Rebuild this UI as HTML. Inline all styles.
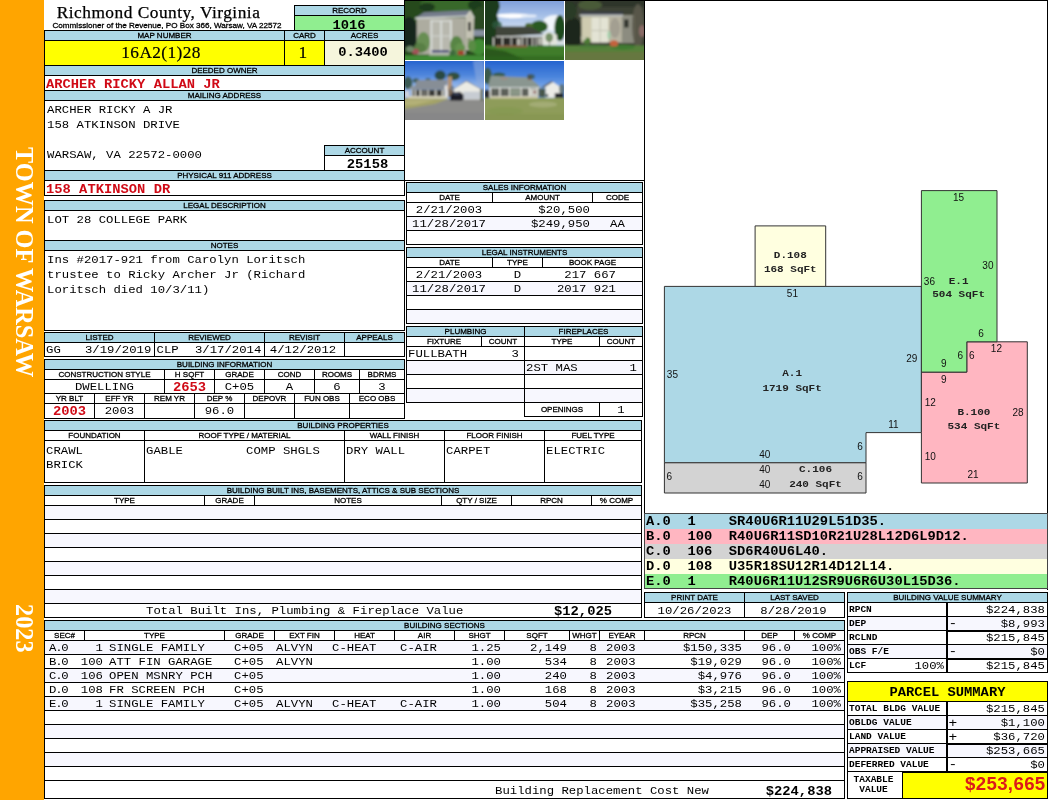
<!DOCTYPE html>
<html lang="en"><head><meta charset="utf-8"><title>Richmond County, Virginia - Property Record 1016</title>
<style>
html,body{margin:0;padding:0;background:#fff;}
#p{will-change:transform;position:relative;width:1050px;height:800px;overflow:hidden;background:#fff;font-family:"Liberation Mono",monospace;}
.b{position:absolute;box-sizing:border-box;border:1px solid #000;}
.r{position:absolute;}
.t{position:absolute;white-space:pre;overflow:visible;color:#000;}
.h{font-family:"Liberation Sans",sans-serif;font-size:8px;-webkit-text-stroke:0.3px #000;}
.v{font-family:"Liberation Mono",monospace;font-size:12.3px;}
.sg{font-family:"Liberation Mono",monospace;font-size:14.5px;}
.vb{font-family:"Liberation Mono",monospace;font-size:13.8px;font-weight:bold;}
.vr{font-family:"Liberation Mono",monospace;font-size:13.8px;font-weight:bold;color:#D00A16;}
.lb{font-family:"Liberation Mono",monospace;font-size:9.5px;font-weight:bold;}
.lst{font-family:"Liberation Mono",monospace;font-size:13.8px;font-weight:bold;}
.ps{font-family:"Liberation Mono",monospace;font-size:13.8px;font-weight:bold;}
.tax{font-family:"Liberation Sans",sans-serif;font-size:18.67px;letter-spacing:0.35px;font-weight:bold;color:#DC1A1A;}
.title{font-family:"Liberation Serif",serif;font-size:17.33px;letter-spacing:0.5px;-webkit-text-stroke:0.25px #000;}
.sub{font-family:"Liberation Sans",sans-serif;font-size:8.1px;-webkit-text-stroke:0.3px #000;}
.big{font-family:"Liberation Serif",serif;font-size:17.33px;letter-spacing:0.4px;-webkit-text-stroke:0.2px #000;}
.side{font-family:"Liberation Serif",serif;font-size:24.3px;font-weight:bold;color:#fff;line-height:24px;transform-origin:0 0;transform:rotate(90deg) translateY(-100%);}
.sk{font-family:"Liberation Sans",sans-serif;font-size:10px;}
.skt{font-family:"Liberation Sans",sans-serif;font-size:10px;fill:#111;}
.skl2{font-family:"Liberation Mono",monospace;font-size:11px;font-weight:bold;fill:#222;}
.skl{font-family:"Liberation Mono",monospace;font-size:9.5px;font-weight:bold;}
</style></head>
<body><div id="p">
<div class="r" style="left:0px;top:0px;width:44px;height:800px;background:#FFA500;"></div>
<div class="t side" style="left:11.9px;top:147.4px;">TOWN OF WARSAW</div>
<div class="t side" style="left:11.9px;top:604px;">2023</div>
<div class="t title" style="left:42.5px;top:0.6px;width:232px;height:24px;line-height:24px;text-align:center;">Richmond County, Virginia</div>
<div class="t sub" style="left:44px;top:20.6px;width:246px;height:10px;line-height:10px;text-align:center;">Commissioner of the Revenue, PO Box 366, Warsaw, VA 22572</div>
<div class="b" style="left:294px;top:5px;width:111px;height:11px;background:#ADD8E6;"></div>
<div class="t h" style="left:295px;top:6px;width:109px;height:9px;line-height:9px;text-align:center;">RECORD</div>
<div class="b" style="left:294px;top:15px;width:111px;height:16px;background:#90EE90;"></div>
<div class="t vb" style="left:294.5px;top:18.62px;width:109px;height:14px;line-height:14px;text-align:center;transform-origin:0 10.68px;transform:scaleY(0.87);">1016</div>
<div class="b" style="left:44px;top:30px;width:241px;height:11px;background:#ADD8E6;"></div>
<div class="b" style="left:284px;top:30px;width:41px;height:11px;background:#ADD8E6;"></div>
<div class="b" style="left:324px;top:30px;width:81px;height:11px;background:#ADD8E6;"></div>
<div class="t h" style="left:45px;top:31px;width:239px;height:9px;line-height:9px;text-align:center;">MAP NUMBER</div>
<div class="t h" style="left:285px;top:31px;width:39px;height:9px;line-height:9px;text-align:center;">CARD</div>
<div class="t h" style="left:325px;top:31px;width:79px;height:9px;line-height:9px;text-align:center;">ACRES</div>
<div class="b" style="left:44px;top:40px;width:241px;height:26px;background:#FFFF00;"></div>
<div class="b" style="left:284px;top:40px;width:41px;height:26px;background:#FFFF00;"></div>
<div class="b" style="left:324px;top:40px;width:81px;height:26px;background:#F5F5DC;"></div>
<div class="t big" style="left:41.6px;top:41px;width:239px;height:24px;line-height:24px;text-align:center;">16A2(1)28</div>
<div class="t big" style="left:283.5px;top:41px;width:39px;height:24px;line-height:24px;text-align:center;">1</div>
<div class="t vb" style="left:323.5px;top:41.12px;width:79px;height:24px;line-height:24px;text-align:center;transform-origin:0 15.68px;transform:scaleY(0.87);">0.3400</div>
<div class="b" style="left:44px;top:65px;width:361px;height:11px;background:#ADD8E6;"></div>
<div class="t h" style="left:45px;top:66px;width:359px;height:9px;line-height:9px;text-align:center;">DEEDED OWNER</div>
<div class="b" style="left:44px;top:75px;width:361px;height:16px;background:#fff;"></div>
<div class="t vr" style="left:46px;top:77.72px;width:358px;height:14px;line-height:14px;text-align:left;transform-origin:0 10.68px;transform:scaleY(0.87);">ARCHER RICKY ALLAN JR</div>
<div class="b" style="left:44px;top:90px;width:361px;height:11px;background:#ADD8E6;"></div>
<div class="t h" style="left:45px;top:91px;width:359px;height:9px;line-height:9px;text-align:center;">MAILING ADDRESS</div>
<div class="b" style="left:44px;top:100px;width:361px;height:71px;background:#fff;"></div>
<div class="t v" style="left:47px;top:103.22px;width:300px;height:15px;line-height:15px;text-align:left;transform-origin:0 10.78px;transform:scaleY(0.87);">ARCHER RICKY A JR</div>
<div class="t v" style="left:47px;top:118.22px;width:300px;height:15px;line-height:15px;text-align:left;transform-origin:0 10.78px;transform:scaleY(0.87);">158 ATKINSON DRIVE</div>
<div class="t v" style="left:47px;top:148.22px;width:300px;height:15px;line-height:15px;text-align:left;transform-origin:0 10.78px;transform:scaleY(0.87);">WARSAW, VA 22572-0000</div>
<div class="b" style="left:324px;top:145px;width:81px;height:11px;background:#ADD8E6;"></div>
<div class="t h" style="left:325px;top:146px;width:79px;height:9px;line-height:9px;text-align:center;">ACCOUNT</div>
<div class="b" style="left:324px;top:155px;width:81px;height:16px;background:#fff;"></div>
<div class="t vb" style="left:328px;top:158.32px;width:79px;height:14px;line-height:14px;text-align:center;transform-origin:0 10.68px;transform:scaleY(0.87);">25158</div>
<div class="b" style="left:44px;top:170px;width:361px;height:11px;background:#ADD8E6;"></div>
<div class="t h" style="left:45px;top:171px;width:359px;height:9px;line-height:9px;text-align:center;">PHYSICAL 911 ADDRESS</div>
<div class="b" style="left:44px;top:180px;width:361px;height:16px;background:#fff;"></div>
<div class="t vr" style="left:46px;top:182.72px;width:358px;height:14px;line-height:14px;text-align:left;transform-origin:0 10.68px;transform:scaleY(0.87);">158 ATKINSON DR</div>
<div class="b" style="left:44px;top:200px;width:361px;height:11px;background:#ADD8E6;"></div>
<div class="t h" style="left:45px;top:201px;width:359px;height:9px;line-height:9px;text-align:center;">LEGAL DESCRIPTION</div>
<div class="b" style="left:44px;top:210px;width:361px;height:31px;background:#fff;"></div>
<div class="t v" style="left:47px;top:213.22px;width:350px;height:15px;line-height:15px;text-align:left;transform-origin:0 10.78px;transform:scaleY(0.87);">LOT 28 COLLEGE PARK</div>
<div class="b" style="left:44px;top:240px;width:361px;height:11px;background:#ADD8E6;"></div>
<div class="t h" style="left:45px;top:241px;width:359px;height:9px;line-height:9px;text-align:center;">NOTES</div>
<div class="b" style="left:44px;top:250px;width:361px;height:81px;background:#fff;"></div>
<div class="t v" style="left:47px;top:253.22px;width:350px;height:15px;line-height:15px;text-align:left;transform-origin:0 10.78px;transform:scaleY(0.87);">Ins #2017-921 from Carolyn Loritsch</div>
<div class="t v" style="left:47px;top:268.22px;width:350px;height:15px;line-height:15px;text-align:left;transform-origin:0 10.78px;transform:scaleY(0.87);">trustee to Ricky Archer Jr (Richard</div>
<div class="t v" style="left:47px;top:283.22px;width:350px;height:15px;line-height:15px;text-align:left;transform-origin:0 10.78px;transform:scaleY(0.87);">Loritsch died 10/3/11)</div>
<div class="b" style="left:44px;top:332px;width:111px;height:11px;background:#ADD8E6;"></div>
<div class="b" style="left:154px;top:332px;width:111px;height:11px;background:#ADD8E6;"></div>
<div class="b" style="left:264px;top:332px;width:81px;height:11px;background:#ADD8E6;"></div>
<div class="b" style="left:344px;top:332px;width:61px;height:11px;background:#ADD8E6;"></div>
<div class="t h" style="left:45px;top:333px;width:109px;height:9px;line-height:9px;text-align:center;">LISTED</div>
<div class="t h" style="left:155px;top:333px;width:109px;height:9px;line-height:9px;text-align:center;">REVIEWED</div>
<div class="t h" style="left:265px;top:333px;width:79px;height:9px;line-height:9px;text-align:center;">REVISIT</div>
<div class="t h" style="left:345px;top:333px;width:59px;height:9px;line-height:9px;text-align:center;">APPEALS</div>
<div class="b" style="left:44px;top:342px;width:111px;height:15px;background:#fff;"></div>
<div class="b" style="left:154px;top:342px;width:111px;height:15px;background:#fff;"></div>
<div class="b" style="left:264px;top:342px;width:81px;height:15px;background:#fff;"></div>
<div class="b" style="left:344px;top:342px;width:61px;height:15px;background:#fff;"></div>
<div class="t v" style="left:46px;top:344.02px;width:108px;height:13px;line-height:13px;text-align:left;transform-origin:0 9.78px;transform:scaleY(0.87);">GG</div>
<div class="t v" style="left:46px;top:344.02px;width:105.3px;height:13px;line-height:13px;text-align:right;transform-origin:0 9.78px;transform:scaleY(0.87);">3/19/2019</div>
<div class="t v" style="left:156.5px;top:344.02px;width:108px;height:13px;line-height:13px;text-align:left;transform-origin:0 9.78px;transform:scaleY(0.87);">CLP</div>
<div class="t v" style="left:156px;top:344.02px;width:105.3px;height:13px;line-height:13px;text-align:right;transform-origin:0 9.78px;transform:scaleY(0.87);">3/17/2014</div>
<div class="t v" style="left:263.5px;top:344.02px;width:79px;height:13px;line-height:13px;text-align:center;transform-origin:0 9.78px;transform:scaleY(0.87);">4/12/2012</div>
<div class="b" style="left:44px;top:359px;width:361px;height:11px;background:#ADD8E6;"></div>
<div class="t h" style="left:45px;top:360px;width:359px;height:9px;line-height:9px;text-align:center;">BUILDING INFORMATION</div>
<div class="b" style="left:44px;top:369px;width:121px;height:11px;background:#fff;"></div>
<div class="b" style="left:164px;top:369px;width:51px;height:11px;background:#fff;"></div>
<div class="b" style="left:214px;top:369px;width:51px;height:11px;background:#fff;"></div>
<div class="b" style="left:264px;top:369px;width:51px;height:11px;background:#fff;"></div>
<div class="b" style="left:314px;top:369px;width:46px;height:11px;background:#fff;"></div>
<div class="b" style="left:359px;top:369px;width:46px;height:11px;background:#fff;"></div>
<div class="t h" style="left:45px;top:370px;width:119px;height:9px;line-height:9px;text-align:center;">CONSTRUCTION STYLE</div>
<div class="t h" style="left:165px;top:370px;width:49px;height:9px;line-height:9px;text-align:center;">H SQFT</div>
<div class="t h" style="left:215px;top:370px;width:49px;height:9px;line-height:9px;text-align:center;">GRADE</div>
<div class="t h" style="left:265px;top:370px;width:49px;height:9px;line-height:9px;text-align:center;">COND</div>
<div class="t h" style="left:315px;top:370px;width:44px;height:9px;line-height:9px;text-align:center;">ROOMS</div>
<div class="t h" style="left:360px;top:370px;width:44px;height:9px;line-height:9px;text-align:center;">BDRMS</div>
<div class="b" style="left:44px;top:379px;width:121px;height:15px;background:#fff;"></div>
<div class="b" style="left:164px;top:379px;width:51px;height:15px;background:#fff;"></div>
<div class="b" style="left:214px;top:379px;width:51px;height:15px;background:#fff;"></div>
<div class="b" style="left:264px;top:379px;width:51px;height:15px;background:#fff;"></div>
<div class="b" style="left:314px;top:379px;width:46px;height:15px;background:#fff;"></div>
<div class="b" style="left:359px;top:379px;width:46px;height:15px;background:#fff;"></div>
<div class="t v" style="left:45px;top:381.02px;width:119px;height:13px;line-height:13px;text-align:center;transform-origin:0 9.78px;transform:scaleY(0.87);">DWELLING</div>
<div class="t vr" style="left:165px;top:380.92px;width:49px;height:13px;line-height:13px;text-align:center;transform-origin:0 10.18px;transform:scaleY(0.87);">2653</div>
<div class="t v" style="left:215px;top:381.02px;width:49px;height:13px;line-height:13px;text-align:center;transform-origin:0 9.78px;transform:scaleY(0.87);">C+05</div>
<div class="t v" style="left:265px;top:381.02px;width:49px;height:13px;line-height:13px;text-align:center;transform-origin:0 9.78px;transform:scaleY(0.87);">A</div>
<div class="t v" style="left:315px;top:381.02px;width:44px;height:13px;line-height:13px;text-align:center;transform-origin:0 9.78px;transform:scaleY(0.87);">6</div>
<div class="t v" style="left:360px;top:381.02px;width:44px;height:13px;line-height:13px;text-align:center;transform-origin:0 9.78px;transform:scaleY(0.87);">3</div>
<div class="b" style="left:44px;top:393px;width:51px;height:11px;background:#fff;"></div>
<div class="b" style="left:94px;top:393px;width:51px;height:11px;background:#fff;"></div>
<div class="b" style="left:144px;top:393px;width:51px;height:11px;background:#fff;"></div>
<div class="b" style="left:194px;top:393px;width:51px;height:11px;background:#fff;"></div>
<div class="b" style="left:244px;top:393px;width:51px;height:11px;background:#fff;"></div>
<div class="b" style="left:294px;top:393px;width:56px;height:11px;background:#fff;"></div>
<div class="b" style="left:349px;top:393px;width:56px;height:11px;background:#fff;"></div>
<div class="t h" style="left:45px;top:394px;width:49px;height:9px;line-height:9px;text-align:center;">YR BLT</div>
<div class="t h" style="left:95px;top:394px;width:49px;height:9px;line-height:9px;text-align:center;">EFF YR</div>
<div class="t h" style="left:145px;top:394px;width:49px;height:9px;line-height:9px;text-align:center;">REM YR</div>
<div class="t h" style="left:195px;top:394px;width:49px;height:9px;line-height:9px;text-align:center;">DEP %</div>
<div class="t h" style="left:245px;top:394px;width:49px;height:9px;line-height:9px;text-align:center;">DEPOVR</div>
<div class="t h" style="left:295px;top:394px;width:54px;height:9px;line-height:9px;text-align:center;">FUN OBS</div>
<div class="t h" style="left:350px;top:394px;width:54px;height:9px;line-height:9px;text-align:center;">ECO OBS</div>
<div class="b" style="left:44px;top:403px;width:51px;height:16px;background:#fff;"></div>
<div class="b" style="left:94px;top:403px;width:51px;height:16px;background:#fff;"></div>
<div class="b" style="left:144px;top:403px;width:51px;height:16px;background:#fff;"></div>
<div class="b" style="left:194px;top:403px;width:51px;height:16px;background:#fff;"></div>
<div class="b" style="left:244px;top:403px;width:51px;height:16px;background:#fff;"></div>
<div class="b" style="left:294px;top:403px;width:56px;height:16px;background:#fff;"></div>
<div class="b" style="left:349px;top:403px;width:56px;height:16px;background:#fff;"></div>
<div class="t vr" style="left:45px;top:404.92px;width:49px;height:13px;line-height:13px;text-align:center;transform-origin:0 10.18px;transform:scaleY(0.87);">2003</div>
<div class="t v" style="left:95px;top:405.02px;width:49px;height:13px;line-height:13px;text-align:center;transform-origin:0 9.78px;transform:scaleY(0.87);">2003</div>
<div class="t v" style="left:195px;top:405.02px;width:49px;height:13px;line-height:13px;text-align:center;transform-origin:0 9.78px;transform:scaleY(0.87);">96.0</div>
<div class="b" style="left:44px;top:420px;width:598px;height:11px;background:#ADD8E6;"></div>
<div class="t h" style="left:45px;top:421px;width:596px;height:9px;line-height:9px;text-align:center;">BUILDING PROPERTIES</div>
<div class="b" style="left:44px;top:430px;width:101px;height:11px;background:#fff;"></div>
<div class="b" style="left:144px;top:430px;width:201px;height:11px;background:#fff;"></div>
<div class="b" style="left:344px;top:430px;width:101px;height:11px;background:#fff;"></div>
<div class="b" style="left:444px;top:430px;width:101px;height:11px;background:#fff;"></div>
<div class="b" style="left:544px;top:430px;width:98px;height:11px;background:#fff;"></div>
<div class="t h" style="left:45px;top:431px;width:99px;height:9px;line-height:9px;text-align:center;">FOUNDATION</div>
<div class="t h" style="left:145px;top:431px;width:199px;height:9px;line-height:9px;text-align:center;">ROOF TYPE / MATERIAL</div>
<div class="t h" style="left:345px;top:431px;width:99px;height:9px;line-height:9px;text-align:center;">WALL FINISH</div>
<div class="t h" style="left:445px;top:431px;width:99px;height:9px;line-height:9px;text-align:center;">FLOOR FINISH</div>
<div class="t h" style="left:545px;top:431px;width:96px;height:9px;line-height:9px;text-align:center;">FUEL TYPE</div>
<div class="b" style="left:44px;top:440px;width:101px;height:43px;background:#fff;"></div>
<div class="b" style="left:144px;top:440px;width:201px;height:43px;background:#fff;"></div>
<div class="b" style="left:344px;top:440px;width:101px;height:43px;background:#fff;"></div>
<div class="b" style="left:444px;top:440px;width:101px;height:43px;background:#fff;"></div>
<div class="b" style="left:544px;top:440px;width:98px;height:43px;background:#fff;"></div>
<div class="t v" style="left:46px;top:443.72px;width:98px;height:14px;line-height:14px;text-align:left;transform-origin:0 10.28px;transform:scaleY(0.87);">CRAWL</div>
<div class="t v" style="left:46px;top:457.72px;width:98px;height:14px;line-height:14px;text-align:left;transform-origin:0 10.28px;transform:scaleY(0.87);">BRICK</div>
<div class="t v" style="left:146px;top:443.72px;width:98px;height:14px;line-height:14px;text-align:left;transform-origin:0 10.28px;transform:scaleY(0.87);">GABLE</div>
<div class="t v" style="left:246px;top:443.72px;width:98px;height:14px;line-height:14px;text-align:left;transform-origin:0 10.28px;transform:scaleY(0.87);">COMP SHGLS</div>
<div class="t v" style="left:346px;top:443.72px;width:98px;height:14px;line-height:14px;text-align:left;transform-origin:0 10.28px;transform:scaleY(0.87);">DRY WALL</div>
<div class="t v" style="left:446px;top:443.72px;width:98px;height:14px;line-height:14px;text-align:left;transform-origin:0 10.28px;transform:scaleY(0.87);">CARPET</div>
<div class="t v" style="left:546px;top:443.72px;width:98px;height:14px;line-height:14px;text-align:left;transform-origin:0 10.28px;transform:scaleY(0.87);">ELECTRIC</div>
<div class="b" style="left:44px;top:485px;width:598px;height:11px;background:#ADD8E6;"></div>
<div class="t h" style="left:45px;top:486px;width:596px;height:9px;line-height:9px;text-align:center;">BUILDING BUILT INS, BASEMENTS, ATTICS &amp; SUB SECTIONS</div>
<div class="b" style="left:44px;top:495px;width:161px;height:11px;background:#fff;"></div>
<div class="b" style="left:204px;top:495px;width:51px;height:11px;background:#fff;"></div>
<div class="b" style="left:254px;top:495px;width:188px;height:11px;background:#fff;"></div>
<div class="b" style="left:441px;top:495px;width:71px;height:11px;background:#fff;"></div>
<div class="b" style="left:511px;top:495px;width:81px;height:11px;background:#fff;"></div>
<div class="b" style="left:591px;top:495px;width:51px;height:11px;background:#fff;"></div>
<div class="t h" style="left:45px;top:496px;width:159px;height:9px;line-height:9px;text-align:center;">TYPE</div>
<div class="t h" style="left:205px;top:496px;width:49px;height:9px;line-height:9px;text-align:center;">GRADE</div>
<div class="t h" style="left:255px;top:496px;width:186px;height:9px;line-height:9px;text-align:center;">NOTES</div>
<div class="t h" style="left:442px;top:496px;width:69px;height:9px;line-height:9px;text-align:center;">QTY / SIZE</div>
<div class="t h" style="left:512px;top:496px;width:79px;height:9px;line-height:9px;text-align:center;">RPCN</div>
<div class="t h" style="left:592px;top:496px;width:49px;height:9px;line-height:9px;text-align:center;">% COMP</div>
<div class="b" style="left:44px;top:505px;width:598px;height:15px;background:#F7F7FE;"></div>
<div class="b" style="left:44px;top:519px;width:598px;height:15px;background:#fff;"></div>
<div class="b" style="left:44px;top:533px;width:598px;height:15px;background:#F7F7FE;"></div>
<div class="b" style="left:44px;top:547px;width:598px;height:15px;background:#fff;"></div>
<div class="b" style="left:44px;top:561px;width:598px;height:15px;background:#F7F7FE;"></div>
<div class="b" style="left:44px;top:575px;width:598px;height:15px;background:#fff;"></div>
<div class="b" style="left:44px;top:589px;width:598px;height:15px;background:#F7F7FE;"></div>
<div class="b" style="left:44px;top:603px;width:598px;height:15px;background:#fff;"></div>
<div class="t v" style="left:146px;top:605.02px;width:330px;height:13px;line-height:13px;text-align:left;transform-origin:0 9.78px;transform:scaleY(0.87);">Total Built Ins, Plumbing &amp; Fireplace Value</div>
<div class="t vb" style="left:500px;top:604.92px;width:112px;height:13px;line-height:13px;text-align:right;transform-origin:0 10.18px;transform:scaleY(0.87);">$12,025</div>
<div class="b" style="left:44px;top:620px;width:801px;height:11px;background:#ADD8E6;"></div>
<div class="t h" style="left:45px;top:621px;width:799px;height:9px;line-height:9px;text-align:center;">BUILDING SECTIONS</div>
<div class="b" style="left:44px;top:630px;width:41px;height:11px;background:#fff;"></div>
<div class="b" style="left:84px;top:630px;width:141px;height:11px;background:#fff;"></div>
<div class="b" style="left:224px;top:630px;width:51px;height:11px;background:#fff;"></div>
<div class="b" style="left:274px;top:630px;width:61px;height:11px;background:#fff;"></div>
<div class="b" style="left:334px;top:630px;width:61px;height:11px;background:#fff;"></div>
<div class="b" style="left:394px;top:630px;width:61px;height:11px;background:#fff;"></div>
<div class="b" style="left:454px;top:630px;width:51px;height:11px;background:#fff;"></div>
<div class="b" style="left:504px;top:630px;width:66px;height:11px;background:#fff;"></div>
<div class="b" style="left:569px;top:630px;width:31px;height:11px;background:#fff;"></div>
<div class="b" style="left:599px;top:630px;width:46px;height:11px;background:#fff;"></div>
<div class="b" style="left:644px;top:630px;width:101px;height:11px;background:#fff;"></div>
<div class="b" style="left:744px;top:630px;width:51px;height:11px;background:#fff;"></div>
<div class="b" style="left:794px;top:630px;width:51px;height:11px;background:#fff;"></div>
<div class="t h" style="left:45px;top:631px;width:39px;height:9px;line-height:9px;text-align:center;">SEC#</div>
<div class="t h" style="left:85px;top:631px;width:139px;height:9px;line-height:9px;text-align:center;">TYPE</div>
<div class="t h" style="left:225px;top:631px;width:49px;height:9px;line-height:9px;text-align:center;">GRADE</div>
<div class="t h" style="left:275px;top:631px;width:59px;height:9px;line-height:9px;text-align:center;">EXT FIN</div>
<div class="t h" style="left:335px;top:631px;width:59px;height:9px;line-height:9px;text-align:center;">HEAT</div>
<div class="t h" style="left:395px;top:631px;width:59px;height:9px;line-height:9px;text-align:center;">AIR</div>
<div class="t h" style="left:455px;top:631px;width:49px;height:9px;line-height:9px;text-align:center;">SHGT</div>
<div class="t h" style="left:505px;top:631px;width:64px;height:9px;line-height:9px;text-align:center;">SQFT</div>
<div class="t h" style="left:570px;top:631px;width:29px;height:9px;line-height:9px;text-align:center;">WHGT</div>
<div class="t h" style="left:600px;top:631px;width:44px;height:9px;line-height:9px;text-align:center;">EYEAR</div>
<div class="t h" style="left:645px;top:631px;width:99px;height:9px;line-height:9px;text-align:center;">RPCN</div>
<div class="t h" style="left:745px;top:631px;width:49px;height:9px;line-height:9px;text-align:center;">DEP</div>
<div class="t h" style="left:795px;top:631px;width:49px;height:9px;line-height:9px;text-align:center;">% COMP</div>
<div class="b" style="left:44px;top:640px;width:801px;height:15px;background:#F7F7FE;"></div>
<div class="b" style="left:44px;top:654px;width:801px;height:15px;background:#fff;"></div>
<div class="b" style="left:44px;top:668px;width:801px;height:15px;background:#F7F7FE;"></div>
<div class="b" style="left:44px;top:682px;width:801px;height:15px;background:#fff;"></div>
<div class="b" style="left:44px;top:696px;width:801px;height:15px;background:#F7F7FE;"></div>
<div class="b" style="left:44px;top:710px;width:801px;height:15px;background:#fff;"></div>
<div class="b" style="left:44px;top:724px;width:801px;height:15px;background:#F7F7FE;"></div>
<div class="b" style="left:44px;top:738px;width:801px;height:15px;background:#fff;"></div>
<div class="b" style="left:44px;top:752px;width:801px;height:15px;background:#F7F7FE;"></div>
<div class="b" style="left:44px;top:766px;width:801px;height:15px;background:#fff;"></div>
<div class="b" style="left:44px;top:780px;width:801px;height:19px;background:#fff;"></div>
<div class="t v" style="left:49px;top:642.02px;width:200px;height:13px;line-height:13px;text-align:left;transform-origin:0 9.78px;transform:scaleY(0.87);letter-spacing:-1.2px;">A.0</div>
<div class="t v" style="left:-97px;top:642.02px;width:200px;height:13px;line-height:13px;text-align:right;transform-origin:0 9.78px;transform:scaleY(0.87);">1</div>
<div class="t v" style="left:109px;top:642.02px;width:200px;height:13px;line-height:13px;text-align:left;transform-origin:0 9.78px;transform:scaleY(0.87);">SINGLE FAMILY</div>
<div class="t v" style="left:234px;top:642.02px;width:200px;height:13px;line-height:13px;text-align:left;transform-origin:0 9.78px;transform:scaleY(0.87);">C+05</div>
<div class="t v" style="left:276px;top:642.02px;width:200px;height:13px;line-height:13px;text-align:left;transform-origin:0 9.78px;transform:scaleY(0.87);">ALVYN</div>
<div class="t v" style="left:332px;top:642.02px;width:200px;height:13px;line-height:13px;text-align:left;transform-origin:0 9.78px;transform:scaleY(0.87);">C-HEAT</div>
<div class="t v" style="left:400px;top:642.02px;width:200px;height:13px;line-height:13px;text-align:left;transform-origin:0 9.78px;transform:scaleY(0.87);">C-AIR</div>
<div class="t v" style="left:301px;top:642.02px;width:200px;height:13px;line-height:13px;text-align:right;transform-origin:0 9.78px;transform:scaleY(0.87);">1.25</div>
<div class="t v" style="left:367px;top:642.02px;width:200px;height:13px;line-height:13px;text-align:right;transform-origin:0 9.78px;transform:scaleY(0.87);">2,149</div>
<div class="t v" style="left:397px;top:642.02px;width:200px;height:13px;line-height:13px;text-align:right;transform-origin:0 9.78px;transform:scaleY(0.87);">8</div>
<div class="t v" style="left:606px;top:642.02px;width:200px;height:13px;line-height:13px;text-align:left;transform-origin:0 9.78px;transform:scaleY(0.87);">2003</div>
<div class="t v" style="left:542px;top:642.02px;width:200px;height:13px;line-height:13px;text-align:right;transform-origin:0 9.78px;transform:scaleY(0.87);">$150,335</div>
<div class="t v" style="left:591px;top:642.02px;width:200px;height:13px;line-height:13px;text-align:right;transform-origin:0 9.78px;transform:scaleY(0.87);">96.0</div>
<div class="t v" style="left:641px;top:642.02px;width:200px;height:13px;line-height:13px;text-align:right;transform-origin:0 9.78px;transform:scaleY(0.87);">100%</div>
<div class="t v" style="left:49px;top:656.02px;width:200px;height:13px;line-height:13px;text-align:left;transform-origin:0 9.78px;transform:scaleY(0.87);letter-spacing:-1.2px;">B.0</div>
<div class="t v" style="left:-97px;top:656.02px;width:200px;height:13px;line-height:13px;text-align:right;transform-origin:0 9.78px;transform:scaleY(0.87);">100</div>
<div class="t v" style="left:109px;top:656.02px;width:200px;height:13px;line-height:13px;text-align:left;transform-origin:0 9.78px;transform:scaleY(0.87);">ATT FIN GARAGE</div>
<div class="t v" style="left:234px;top:656.02px;width:200px;height:13px;line-height:13px;text-align:left;transform-origin:0 9.78px;transform:scaleY(0.87);">C+05</div>
<div class="t v" style="left:276px;top:656.02px;width:200px;height:13px;line-height:13px;text-align:left;transform-origin:0 9.78px;transform:scaleY(0.87);">ALVYN</div>
<div class="t v" style="left:301px;top:656.02px;width:200px;height:13px;line-height:13px;text-align:right;transform-origin:0 9.78px;transform:scaleY(0.87);">1.00</div>
<div class="t v" style="left:367px;top:656.02px;width:200px;height:13px;line-height:13px;text-align:right;transform-origin:0 9.78px;transform:scaleY(0.87);">534</div>
<div class="t v" style="left:397px;top:656.02px;width:200px;height:13px;line-height:13px;text-align:right;transform-origin:0 9.78px;transform:scaleY(0.87);">8</div>
<div class="t v" style="left:606px;top:656.02px;width:200px;height:13px;line-height:13px;text-align:left;transform-origin:0 9.78px;transform:scaleY(0.87);">2003</div>
<div class="t v" style="left:542px;top:656.02px;width:200px;height:13px;line-height:13px;text-align:right;transform-origin:0 9.78px;transform:scaleY(0.87);">$19,029</div>
<div class="t v" style="left:591px;top:656.02px;width:200px;height:13px;line-height:13px;text-align:right;transform-origin:0 9.78px;transform:scaleY(0.87);">96.0</div>
<div class="t v" style="left:641px;top:656.02px;width:200px;height:13px;line-height:13px;text-align:right;transform-origin:0 9.78px;transform:scaleY(0.87);">100%</div>
<div class="t v" style="left:49px;top:670.02px;width:200px;height:13px;line-height:13px;text-align:left;transform-origin:0 9.78px;transform:scaleY(0.87);letter-spacing:-1.2px;">C.0</div>
<div class="t v" style="left:-97px;top:670.02px;width:200px;height:13px;line-height:13px;text-align:right;transform-origin:0 9.78px;transform:scaleY(0.87);">106</div>
<div class="t v" style="left:109px;top:670.02px;width:200px;height:13px;line-height:13px;text-align:left;transform-origin:0 9.78px;transform:scaleY(0.87);">OPEN MSNRY PCH</div>
<div class="t v" style="left:234px;top:670.02px;width:200px;height:13px;line-height:13px;text-align:left;transform-origin:0 9.78px;transform:scaleY(0.87);">C+05</div>
<div class="t v" style="left:301px;top:670.02px;width:200px;height:13px;line-height:13px;text-align:right;transform-origin:0 9.78px;transform:scaleY(0.87);">1.00</div>
<div class="t v" style="left:367px;top:670.02px;width:200px;height:13px;line-height:13px;text-align:right;transform-origin:0 9.78px;transform:scaleY(0.87);">240</div>
<div class="t v" style="left:397px;top:670.02px;width:200px;height:13px;line-height:13px;text-align:right;transform-origin:0 9.78px;transform:scaleY(0.87);">8</div>
<div class="t v" style="left:606px;top:670.02px;width:200px;height:13px;line-height:13px;text-align:left;transform-origin:0 9.78px;transform:scaleY(0.87);">2003</div>
<div class="t v" style="left:542px;top:670.02px;width:200px;height:13px;line-height:13px;text-align:right;transform-origin:0 9.78px;transform:scaleY(0.87);">$4,976</div>
<div class="t v" style="left:591px;top:670.02px;width:200px;height:13px;line-height:13px;text-align:right;transform-origin:0 9.78px;transform:scaleY(0.87);">96.0</div>
<div class="t v" style="left:641px;top:670.02px;width:200px;height:13px;line-height:13px;text-align:right;transform-origin:0 9.78px;transform:scaleY(0.87);">100%</div>
<div class="t v" style="left:49px;top:684.02px;width:200px;height:13px;line-height:13px;text-align:left;transform-origin:0 9.78px;transform:scaleY(0.87);letter-spacing:-1.2px;">D.0</div>
<div class="t v" style="left:-97px;top:684.02px;width:200px;height:13px;line-height:13px;text-align:right;transform-origin:0 9.78px;transform:scaleY(0.87);">108</div>
<div class="t v" style="left:109px;top:684.02px;width:200px;height:13px;line-height:13px;text-align:left;transform-origin:0 9.78px;transform:scaleY(0.87);">FR SCREEN PCH</div>
<div class="t v" style="left:234px;top:684.02px;width:200px;height:13px;line-height:13px;text-align:left;transform-origin:0 9.78px;transform:scaleY(0.87);">C+05</div>
<div class="t v" style="left:301px;top:684.02px;width:200px;height:13px;line-height:13px;text-align:right;transform-origin:0 9.78px;transform:scaleY(0.87);">1.00</div>
<div class="t v" style="left:367px;top:684.02px;width:200px;height:13px;line-height:13px;text-align:right;transform-origin:0 9.78px;transform:scaleY(0.87);">168</div>
<div class="t v" style="left:397px;top:684.02px;width:200px;height:13px;line-height:13px;text-align:right;transform-origin:0 9.78px;transform:scaleY(0.87);">8</div>
<div class="t v" style="left:606px;top:684.02px;width:200px;height:13px;line-height:13px;text-align:left;transform-origin:0 9.78px;transform:scaleY(0.87);">2003</div>
<div class="t v" style="left:542px;top:684.02px;width:200px;height:13px;line-height:13px;text-align:right;transform-origin:0 9.78px;transform:scaleY(0.87);">$3,215</div>
<div class="t v" style="left:591px;top:684.02px;width:200px;height:13px;line-height:13px;text-align:right;transform-origin:0 9.78px;transform:scaleY(0.87);">96.0</div>
<div class="t v" style="left:641px;top:684.02px;width:200px;height:13px;line-height:13px;text-align:right;transform-origin:0 9.78px;transform:scaleY(0.87);">100%</div>
<div class="t v" style="left:49px;top:698.02px;width:200px;height:13px;line-height:13px;text-align:left;transform-origin:0 9.78px;transform:scaleY(0.87);letter-spacing:-1.2px;">E.0</div>
<div class="t v" style="left:-97px;top:698.02px;width:200px;height:13px;line-height:13px;text-align:right;transform-origin:0 9.78px;transform:scaleY(0.87);">1</div>
<div class="t v" style="left:109px;top:698.02px;width:200px;height:13px;line-height:13px;text-align:left;transform-origin:0 9.78px;transform:scaleY(0.87);">SINGLE FAMILY</div>
<div class="t v" style="left:234px;top:698.02px;width:200px;height:13px;line-height:13px;text-align:left;transform-origin:0 9.78px;transform:scaleY(0.87);">C+05</div>
<div class="t v" style="left:276px;top:698.02px;width:200px;height:13px;line-height:13px;text-align:left;transform-origin:0 9.78px;transform:scaleY(0.87);">ALVYN</div>
<div class="t v" style="left:332px;top:698.02px;width:200px;height:13px;line-height:13px;text-align:left;transform-origin:0 9.78px;transform:scaleY(0.87);">C-HEAT</div>
<div class="t v" style="left:400px;top:698.02px;width:200px;height:13px;line-height:13px;text-align:left;transform-origin:0 9.78px;transform:scaleY(0.87);">C-AIR</div>
<div class="t v" style="left:301px;top:698.02px;width:200px;height:13px;line-height:13px;text-align:right;transform-origin:0 9.78px;transform:scaleY(0.87);">1.00</div>
<div class="t v" style="left:367px;top:698.02px;width:200px;height:13px;line-height:13px;text-align:right;transform-origin:0 9.78px;transform:scaleY(0.87);">504</div>
<div class="t v" style="left:397px;top:698.02px;width:200px;height:13px;line-height:13px;text-align:right;transform-origin:0 9.78px;transform:scaleY(0.87);">8</div>
<div class="t v" style="left:606px;top:698.02px;width:200px;height:13px;line-height:13px;text-align:left;transform-origin:0 9.78px;transform:scaleY(0.87);">2003</div>
<div class="t v" style="left:542px;top:698.02px;width:200px;height:13px;line-height:13px;text-align:right;transform-origin:0 9.78px;transform:scaleY(0.87);">$35,258</div>
<div class="t v" style="left:591px;top:698.02px;width:200px;height:13px;line-height:13px;text-align:right;transform-origin:0 9.78px;transform:scaleY(0.87);">96.0</div>
<div class="t v" style="left:641px;top:698.02px;width:200px;height:13px;line-height:13px;text-align:right;transform-origin:0 9.78px;transform:scaleY(0.87);">100%</div>
<div class="t v" style="left:400px;top:785.02px;width:400px;height:13px;line-height:13px;text-align:left;transform-origin:0 9.78px;transform:scaleY(0.87);left:495px;">Building Replacement Cost New</div>
<div class="t vb" style="left:700px;top:784.92px;width:132px;height:13px;line-height:13px;text-align:right;transform-origin:0 10.18px;transform:scaleY(0.87);">$224,838</div>
<div class="r" style="left:404px;top:0px;width:1px;height:181px;background:#000;"></div>
<div class="r" style="left:644px;top:0px;width:1px;height:515px;background:#000;"></div>
<div class="r" style="left:404px;top:180px;width:241px;height:1px;background:#000;"></div>
<div class="r" style="left:404px;top:0px;width:644px;height:1px;background:#000;"></div>
<div class="r" style="left:1047px;top:0px;width:1px;height:590px;background:#000;"></div>
<svg class="r" style="left:405px;top:1px" width="78.6" height="58.6" viewBox="0 0 78.6 58.6"><defs><filter id="bl0" x="-10%" y="-10%" width="120%" height="120%"><feGaussianBlur stdDeviation="0.8"/></filter></defs><g filter="url(#bl0)"><rect x="-6" y="-6" width="92" height="72" fill="#284a1e"/><ellipse cx="45" cy="3" rx="30" ry="8" fill="#37672a"/><ellipse cx="22" cy="6" rx="8" ry="4" fill="#1f3a1a"/><ellipse cx="70" cy="4" rx="7" ry="5" fill="#1f3d1a"/><ellipse cx="4" cy="32" rx="9" ry="16" fill="#18281a"/><ellipse cx="75" cy="20" rx="8" ry="14" fill="#2a4a22"/><rect x="68" y="29" width="12" height="6" fill="#8790a0"/><ellipse cx="74" cy="46" rx="8" ry="8" fill="#428c36"/><polygon points="60.5,15 65.4,9.6 69,16.8 68.2,49 60.5,49" fill="#c4c2b4"/><rect x="63" y="21" width="2.8" height="9" fill="#3c3c38"/><rect x="62.3" y="37" width="4.6" height="11" fill="#8a9478"/><rect x="11.7" y="17" width="49" height="36.5" fill="#adaca0"/><polygon points="10.2,17.2 19,11.2 64.6,9.2 60.8,15.2" fill="#767d8c"/><polygon points="10.2,16.6 61,14.4 61,16 10.2,18.3" fill="#cfd3cf"/><polygon points="60.6,15.2 65.2,9.2 69.6,16.8 68.6,17.2 65.2,10.8 61.4,16" fill="#d4d6d0"/><rect x="25.6" y="19.6" width="21.2" height="33" fill="#b8b8ae"/><rect x="25.4" y="19.6" width="1.9" height="33.4" fill="#d9ddd9"/><rect x="35.2" y="19.6" width="1.9" height="33.4" fill="#d9ddd9"/><rect x="45" y="19.6" width="1.9" height="33.4" fill="#d9ddd9"/><rect x="25.4" y="19.2" width="21.5" height="1.4" fill="#d9ddd9"/><rect x="25.4" y="34.5" width="21.5" height="1.0" fill="#d2d6d2"/><rect x="26.8" y="49.2" width="17" height="2.2" fill="#3a4074"/><rect x="25" y="52" width="19" height="2.5" fill="#b9bdb4"/><ellipse cx="18.5" cy="41" rx="6.5" ry="10" fill="#688e52"/><ellipse cx="15" cy="47" rx="6" ry="5" fill="#587f44"/><ellipse cx="51.5" cy="44.5" rx="6.5" ry="9.5" fill="#588544"/><ellipse cx="55" cy="47" rx="5" ry="5" fill="#64924e"/><ellipse cx="67" cy="45" rx="4" ry="6" fill="#5a8c44"/><ellipse cx="10.5" cy="50.5" rx="3.6" ry="2.8" fill="#a25358"/><ellipse cx="5" cy="48" rx="4" ry="3" fill="#6e8868"/><rect x="53" y="49.6" width="5.8" height="4.8" fill="#a3432f"/><ellipse cx="47.5" cy="51.5" rx="3" ry="2.6" fill="#3c6a3c"/><rect x="-6" y="54.3" width="92" height="12" fill="#3f8c34"/><rect x="24" y="53" width="20" height="1.6" fill="#a9b0a0"/></g></svg><svg class="r" style="left:485.1px;top:1px" width="78.6" height="58.6" viewBox="0 0 78.6 58.6"><defs><filter id="bl1" x="-10%" y="-10%" width="120%" height="120%"><feGaussianBlur stdDeviation="0.8"/></filter><linearGradient id="sky2" x1="0" y1="0" x2="0" y2="1"><stop offset="0.08" stop-color="#7f9fda"/><stop offset="0.3" stop-color="#a9c2e8"/><stop offset="0.5" stop-color="#d2e0f2"/></linearGradient></defs><g filter="url(#bl1)"><rect x="-6" y="-6" width="92" height="72" fill="url(#sky2)"/><ellipse cx="28" cy="14.8" rx="16" ry="2.4" fill="#ffffff"/><ellipse cx="70" cy="22" rx="12" ry="8" fill="#f2f6fb"/><ellipse cx="44" cy="15" rx="8" ry="1.6" fill="#e4ecf8"/><polygon points="-6,-6 13,-6 15,6 12,14 14,22 11,30 12,48 -6,48" fill="#1e3a1a"/><ellipse cx="12" cy="24" rx="5" ry="4" fill="#2d5a40" opacity="0.8"/><ellipse cx="54.2" cy="25.6" rx="8.6" ry="6" fill="#2c5a22"/><ellipse cx="44" cy="25" rx="4" ry="3" fill="#4a6a2a"/><ellipse cx="75" cy="27" rx="5.6" ry="13" fill="#1f4a1c"/><rect x="-6" y="44.5" width="92" height="22" fill="#3f7c2a"/><polygon points="-6,46 20,50 40,58.6 -6,66" fill="#2a581c"/><rect x="-6" y="55" width="92" height="10" fill="#2f6420" opacity="0.6"/><polygon points="11,25.4 45,25.4 59,33.2 11,35.6" fill="#3f443a"/><rect x="8" y="36" width="50" height="8.6" fill="#2b2b27"/><rect x="11" y="35.2" width="47" height="1.2" fill="#c8c8c0"/><rect x="8" y="36.4" width="1.1" height="8.4" fill="#d8d8d0"/><rect x="16.8" y="36.4" width="1.1" height="8.4" fill="#d8d8d0"/><rect x="25.6" y="36.4" width="1.1" height="8.4" fill="#d8d8d0"/><rect x="36.8" y="36.4" width="1.1" height="8.4" fill="#d8d8d0"/><rect x="41.4" y="36.4" width="1.1" height="8.4" fill="#d8d8d0"/><rect x="46.8" y="36.4" width="1.1" height="8.4" fill="#d8d8d0"/><rect x="50.3" y="36.4" width="1.1" height="8.4" fill="#d8d8d0"/><rect x="32" y="37.6" width="3.6" height="6.6" fill="#b9b9b0"/><rect x="52.5" y="36.8" width="5" height="7" fill="#aeb0a6"/><rect x="11" y="44.4" width="31" height="2" fill="#8c5c42"/><polygon points="57.3,34.6 63,30.2 71.9,33.8 71.9,43.8 57.3,43.8" fill="#e2e4dc"/><ellipse cx="64.2" cy="36.5" rx="3.8" ry="4.6" fill="#5f7e50" opacity="0.85"/><rect x="64" y="40" width="0.6" height="5" fill="#4a4a3a"/><rect x="72" y="40.5" width="8" height="2" fill="#d8dcd8"/></g></svg><svg class="r" style="left:565.1px;top:1px" width="78.6" height="58.6" viewBox="0 0 78.6 58.6"><defs><filter id="bl2" x="-10%" y="-10%" width="120%" height="120%"><feGaussianBlur stdDeviation="0.8"/></filter></defs><g filter="url(#bl2)"><rect x="-6" y="-6" width="92" height="72" fill="#3c4234"/><rect x="-6" y="-6" width="92" height="12" fill="#2e3429"/><ellipse cx="25" cy="4" rx="12" ry="5" fill="#4a5a38"/><ellipse cx="8" cy="32" rx="9.5" ry="16" fill="#1f281c"/><ellipse cx="5" cy="10" rx="7" ry="9" fill="#2b3a26"/><rect x="56" y="14" width="14" height="28" fill="#8c8c80"/><rect x="59" y="18.5" width="4.6" height="8" fill="#33352f"/><ellipse cx="73" cy="25" rx="6" ry="22" fill="#5c5a4c" opacity="0.9"/><ellipse cx="77" cy="30" rx="3" ry="6" fill="#8a6a66"/><rect x="-6" y="44.4" width="92" height="22" fill="#57803a"/><rect x="-6" y="51" width="92" height="16" fill="#6a7442" opacity="0.8"/><ellipse cx="58" cy="46" rx="12" ry="2.6" fill="#3f7a32"/><ellipse cx="28" cy="45.4" rx="14" ry="1.6" fill="#4a7a38"/><rect x="16.4" y="15.4" width="40" height="26" fill="#cfcbb0"/><rect x="44" y="15.4" width="12.5" height="26" fill="#b8b4a2"/><ellipse cx="50" cy="27" rx="5" ry="10" fill="#9a968a" opacity="0.7"/><polygon points="14.6,13.8 17,10.4 58.4,10.4 57.6,13.8" fill="#3b3f47"/><rect x="14.6" y="13.6" width="43.4" height="1.7" fill="#c4c8c8"/><rect x="26.6" y="16.4" width="16.6" height="25.6" fill="#e3e3d4"/><rect x="34.7" y="16.4" width="0.8" height="25.6" fill="#bdbdac"/><rect x="26.6" y="29" width="16.6" height="0.9" fill="#bfbfb0"/><rect x="25" y="41.6" width="20" height="1.6" fill="#4a4a40"/><ellipse cx="22" cy="40" rx="3.6" ry="3.4" fill="#4e7a36"/><ellipse cx="18.6" cy="37" rx="2.6" ry="2.2" fill="#c9c8b0"/><ellipse cx="49" cy="42.4" rx="4" ry="3.2" fill="#c4623e"/><ellipse cx="44" cy="34" rx="1.6" ry="4" fill="#9ad0a8" opacity="0.8"/></g></svg><svg class="r" style="left:405px;top:61.2px" width="78.6" height="58.6" viewBox="0 0 78.6 58.6"><defs><filter id="bl3" x="-10%" y="-10%" width="120%" height="120%"><feGaussianBlur stdDeviation="0.8"/></filter><linearGradient id="sky4" x1="0" y1="0" x2="0" y2="1"><stop offset="0.08" stop-color="#2764cf"/><stop offset="0.28" stop-color="#4f86dc"/><stop offset="0.42" stop-color="#8fb4ea"/></linearGradient></defs><g filter="url(#bl3)"><rect x="-6" y="-6" width="92" height="72" fill="url(#sky4)"/><ellipse cx="35.2" cy="14.4" rx="5.6" ry="4.8" fill="#2c4a42"/><ellipse cx="48.4" cy="15.2" rx="6.4" ry="4" fill="#31503e"/><ellipse cx="3" cy="22" rx="4.5" ry="6.5" fill="#3a5a52"/><ellipse cx="11" cy="19.6" rx="3.2" ry="2.4" fill="#3f5f60"/><ellipse cx="23" cy="18.4" rx="2.6" ry="1.4" fill="#4a6a70"/><polygon points="68,0 78.6,-2 80,30 72,24" fill="#8aa8dc" opacity="0.6"/><rect x="-6" y="38" width="92" height="30" fill="#8c8c8a"/><polygon points="-6,37 44,37.4 30,43 -6,49" fill="#a3a268"/><polygon points="-6,39 30,39 10,44 -6,45" fill="#b6b47a" opacity="0.8"/><rect x="-6" y="52" width="92" height="14" fill="#858587" opacity="0.7"/><polygon points="8.4,28.6 12,19.2 42.4,18.8 40.5,28.6" fill="#878e96"/><polygon points="2,28.6 9,24 9,28.6" fill="#8f969c"/><rect x="6.6" y="28.8" width="33" height="6.6" fill="#3b3b37"/><rect x="6.4" y="28.8" width="1.3" height="7" fill="#e6e6de"/><rect x="9.6" y="28.8" width="1.3" height="7" fill="#e6e6de"/><rect x="14.7" y="28.8" width="1.3" height="7" fill="#e6e6de"/><rect x="22.4" y="28.8" width="1.3" height="7" fill="#e6e6de"/><rect x="30.1" y="28.8" width="1.3" height="7" fill="#e6e6de"/><rect x="37" y="28.8" width="1.3" height="7" fill="#e6e6de"/><rect x="16.5" y="29.6" width="5" height="5.4" fill="#6c6c66"/><rect x="3" y="35.2" width="39.5" height="2.3" fill="#d9d1b2"/><rect x="0" y="30" width="4" height="6" fill="#d0d4d8"/><rect x="39.6" y="24.4" width="3.6" height="11.4" fill="#e2e2e2"/><rect x="42.6" y="15.4" width="4.4" height="14" fill="#b29272"/><rect x="43" y="28.6" width="5.6" height="7.5" fill="#7a6a5c"/><polygon points="48,28.4 61.4,19.4 76.4,28 75.4,28.6 61.4,20.8 49.4,28.8" fill="#7c838b"/><polygon points="49.2,28 61.4,20.4 75.2,28 75.2,38.4 49.2,38.4" fill="#ebebe4"/><rect x="58.3" y="30.6" width="16.6" height="7.4" fill="#c7ccd2"/><polygon points="47,24 49.5,27.6 44,28.4" fill="#6c747c"/><polygon points="45,39.6 45.4,34.4 48,31.2 55,30.8 58.4,33.6 58.6,38.4 56,39.8" fill="#1b1c27"/><rect x="48.6" y="32" width="6" height="1.6" fill="#46506a"/><rect x="75.2" y="28" width="3" height="12" fill="#6e7666"/></g></svg><svg class="r" style="left:485.1px;top:61.2px" width="78.6" height="58.6" viewBox="0 0 78.6 58.6"><defs><filter id="bl4" x="-10%" y="-10%" width="120%" height="120%"><feGaussianBlur stdDeviation="0.8"/></filter><linearGradient id="sky5" x1="0" y1="0" x2="0" y2="1"><stop offset="0.08" stop-color="#2563cf"/><stop offset="0.3" stop-color="#4a84dc"/><stop offset="0.45" stop-color="#78a6e8"/></linearGradient></defs><g filter="url(#bl4)"><rect x="-6" y="-6" width="92" height="72" fill="url(#sky5)"/><ellipse cx="2.5" cy="15" rx="4.5" ry="8.5" fill="#3a5a4a"/><ellipse cx="14" cy="13.8" rx="6.5" ry="2.2" fill="#355a48"/><ellipse cx="2" cy="33" rx="3" ry="4.5" fill="#2c2c2a"/><rect x="-6" y="37" width="92" height="30" fill="#8e9c5a"/><ellipse cx="58" cy="43.5" rx="14" ry="3" fill="#a9b07c" opacity="0.8"/><ellipse cx="20" cy="50" rx="18" ry="4" fill="#869a50" opacity="0.8"/><rect x="-6" y="53" width="92" height="14" fill="#84944f" opacity="0.6"/><polygon points="2.8,26.4 5.8,14.8 44.9,16.6 55.9,26.4" fill="#8a9690"/><ellipse cx="19" cy="17.4" rx="4" ry="1.2" fill="#a08a80" opacity="0.8"/><rect x="42.8" y="13.6" width="4" height="5" fill="#8a4a3c"/><ellipse cx="46" cy="15.5" rx="4" ry="2.6" fill="#3a5a52" opacity="0.8"/><rect x="4.8" y="27" width="49.5" height="8.4" fill="#5b5f59"/><rect x="4.8" y="26.2" width="50" height="1.2" fill="#d9dbd3"/><rect x="4.6" y="27" width="1.4" height="9" fill="#ecece4"/><rect x="14.2" y="27" width="1.4" height="9" fill="#ecece4"/><rect x="23.8" y="27" width="1.4" height="9" fill="#ecece4"/><rect x="35.4" y="27" width="1.4" height="9" fill="#ecece4"/><rect x="43.6" y="27" width="1.4" height="9" fill="#ecece4"/><rect x="51.6" y="27" width="1.4" height="9" fill="#ecece4"/><rect x="24.8" y="28" width="10.6" height="6.6" fill="#8a9686"/><rect x="45" y="28" width="6.4" height="7" fill="#cfcfc8"/><ellipse cx="49.6" cy="31" rx="1.2" ry="1.6" fill="#8a4a4a"/><rect x="4.8" y="35.2" width="48" height="2.2" fill="#d3cbac"/><polygon points="55.6,26.4 66.6,20 68.4,21.2 60.4,26.2" fill="#5c626a"/><polygon points="60.4,25.8 68,21 75.9,26.6 75.9,36.8 60.4,36.8" fill="#ebebe6"/><rect x="54.4" y="27.6" width="6" height="8.8" fill="#46564a"/><rect x="69.8" y="32.2" width="9" height="4.6" fill="#1f2128"/><ellipse cx="77" cy="28" rx="3" ry="5" fill="#5a6a68" opacity="0.8"/><ellipse cx="62" cy="34.4" rx="1.2" ry="1.6" fill="#39433a"/></g></svg>
<div class="b" style="left:406px;top:182px;width:237px;height:11px;background:#ADD8E6;"></div>
<div class="t h" style="left:407px;top:183px;width:235px;height:9px;line-height:9px;text-align:center;">SALES INFORMATION</div>
<div class="b" style="left:406px;top:192px;width:87px;height:11px;background:#fff;"></div>
<div class="b" style="left:492px;top:192px;width:101px;height:11px;background:#fff;"></div>
<div class="b" style="left:592px;top:192px;width:51px;height:11px;background:#fff;"></div>
<div class="t h" style="left:407px;top:193px;width:85px;height:9px;line-height:9px;text-align:center;">DATE</div>
<div class="t h" style="left:493px;top:193px;width:99px;height:9px;line-height:9px;text-align:center;">AMOUNT</div>
<div class="t h" style="left:593px;top:193px;width:49px;height:9px;line-height:9px;text-align:center;">CODE</div>
<div class="b" style="left:406px;top:202px;width:237px;height:15px;background:#fff;"></div>
<div class="b" style="left:406px;top:216px;width:237px;height:15px;background:#F7F7FE;"></div>
<div class="b" style="left:406px;top:230px;width:237px;height:15px;background:#fff;"></div>
<div class="t v" style="left:406.5px;top:204.02px;width:85px;height:13px;line-height:13px;text-align:center;transform-origin:0 9.78px;transform:scaleY(0.87);">2/21/2003</div>
<div class="t v" style="left:500px;top:204.02px;width:90px;height:13px;line-height:13px;text-align:right;transform-origin:0 9.78px;transform:scaleY(0.87);">$20,500</div>
<div class="t v" style="left:406.5px;top:218.02px;width:85px;height:13px;line-height:13px;text-align:center;transform-origin:0 9.78px;transform:scaleY(0.87);">11/28/2017</div>
<div class="t v" style="left:500px;top:218.02px;width:90px;height:13px;line-height:13px;text-align:right;transform-origin:0 9.78px;transform:scaleY(0.87);">$249,950</div>
<div class="t v" style="left:593px;top:218.02px;width:49px;height:13px;line-height:13px;text-align:center;transform-origin:0 9.78px;transform:scaleY(0.87);">AA</div>
<div class="b" style="left:406px;top:247px;width:237px;height:11px;background:#ADD8E6;"></div>
<div class="t h" style="left:407px;top:248px;width:235px;height:9px;line-height:9px;text-align:center;">LEGAL INSTRUMENTS</div>
<div class="b" style="left:406px;top:257px;width:87px;height:11px;background:#fff;"></div>
<div class="b" style="left:492px;top:257px;width:51px;height:11px;background:#fff;"></div>
<div class="b" style="left:542px;top:257px;width:101px;height:11px;background:#fff;"></div>
<div class="t h" style="left:407px;top:258px;width:85px;height:9px;line-height:9px;text-align:center;">DATE</div>
<div class="t h" style="left:493px;top:258px;width:49px;height:9px;line-height:9px;text-align:center;">TYPE</div>
<div class="t h" style="left:543px;top:258px;width:99px;height:9px;line-height:9px;text-align:center;">BOOK PAGE</div>
<div class="b" style="left:406px;top:267px;width:237px;height:15px;background:#fff;"></div>
<div class="b" style="left:406px;top:281px;width:237px;height:15px;background:#F7F7FE;"></div>
<div class="b" style="left:406px;top:295px;width:237px;height:15px;background:#fff;"></div>
<div class="b" style="left:406px;top:309px;width:237px;height:15px;background:#F7F7FE;"></div>
<div class="t v" style="left:406.5px;top:269.02px;width:85px;height:13px;line-height:13px;text-align:center;transform-origin:0 9.78px;transform:scaleY(0.87);">2/21/2003</div>
<div class="t v" style="left:493px;top:269.02px;width:49px;height:13px;line-height:13px;text-align:center;transform-origin:0 9.78px;transform:scaleY(0.87);">D</div>
<div class="t v" style="left:516px;top:269.02px;width:100px;height:13px;line-height:13px;text-align:right;transform-origin:0 9.78px;transform:scaleY(0.87);">217 667</div>
<div class="t v" style="left:406.5px;top:283.02px;width:85px;height:13px;line-height:13px;text-align:center;transform-origin:0 9.78px;transform:scaleY(0.87);">11/28/2017</div>
<div class="t v" style="left:493px;top:283.02px;width:49px;height:13px;line-height:13px;text-align:center;transform-origin:0 9.78px;transform:scaleY(0.87);">D</div>
<div class="t v" style="left:516px;top:283.02px;width:100px;height:13px;line-height:13px;text-align:right;transform-origin:0 9.78px;transform:scaleY(0.87);">2017 921</div>
<div class="b" style="left:406px;top:326px;width:119px;height:11px;background:#ADD8E6;"></div>
<div class="t h" style="left:407px;top:327px;width:117px;height:9px;line-height:9px;text-align:center;">PLUMBING</div>
<div class="b" style="left:524px;top:326px;width:119px;height:11px;background:#ADD8E6;"></div>
<div class="t h" style="left:525px;top:327px;width:117px;height:9px;line-height:9px;text-align:center;">FIREPLACES</div>
<div class="b" style="left:406px;top:336px;width:76px;height:11px;background:#fff;"></div>
<div class="b" style="left:481px;top:336px;width:44px;height:11px;background:#fff;"></div>
<div class="b" style="left:524px;top:336px;width:76px;height:11px;background:#fff;"></div>
<div class="b" style="left:599px;top:336px;width:44px;height:11px;background:#fff;"></div>
<div class="t h" style="left:407px;top:337px;width:74px;height:9px;line-height:9px;text-align:center;">FIXTURE</div>
<div class="t h" style="left:482px;top:337px;width:42px;height:9px;line-height:9px;text-align:center;">COUNT</div>
<div class="t h" style="left:525px;top:337px;width:74px;height:9px;line-height:9px;text-align:center;">TYPE</div>
<div class="t h" style="left:600px;top:337px;width:42px;height:9px;line-height:9px;text-align:center;">COUNT</div>
<div class="b" style="left:406px;top:346px;width:119px;height:15px;background:#fff;"></div>
<div class="b" style="left:524px;top:346px;width:119px;height:15px;background:#fff;"></div>
<div class="b" style="left:406px;top:360px;width:119px;height:15px;background:#F7F7FE;"></div>
<div class="b" style="left:524px;top:360px;width:119px;height:15px;background:#F7F7FE;"></div>
<div class="b" style="left:406px;top:374px;width:119px;height:15px;background:#fff;"></div>
<div class="b" style="left:524px;top:374px;width:119px;height:15px;background:#fff;"></div>
<div class="b" style="left:406px;top:388px;width:119px;height:15px;background:#F7F7FE;"></div>
<div class="b" style="left:524px;top:388px;width:119px;height:15px;background:#F7F7FE;"></div>
<div class="t v" style="left:408px;top:348.02px;width:80px;height:13px;line-height:13px;text-align:left;transform-origin:0 9.78px;transform:scaleY(0.87);">FULLBATH</div>
<div class="t v" style="left:440px;top:348.02px;width:79px;height:13px;line-height:13px;text-align:right;transform-origin:0 9.78px;transform:scaleY(0.87);">3</div>
<div class="t v" style="left:526px;top:362.02px;width:80px;height:13px;line-height:13px;text-align:left;transform-origin:0 9.78px;transform:scaleY(0.87);">2ST MAS</div>
<div class="t v" style="left:560px;top:362.02px;width:77px;height:13px;line-height:13px;text-align:right;transform-origin:0 9.78px;transform:scaleY(0.87);">1</div>
<div class="b" style="left:524px;top:402px;width:76px;height:15px;background:#fff;"></div>
<div class="b" style="left:599px;top:402px;width:44px;height:15px;background:#fff;"></div>
<div class="t h" style="left:525px;top:403px;width:74px;height:13px;line-height:13px;text-align:center;">OPENINGS</div>
<div class="t v" style="left:600px;top:404.02px;width:42px;height:13px;line-height:13px;text-align:center;transform-origin:0 9.78px;transform:scaleY(0.87);">1</div>
<svg class="r" style="left:0;top:0;overflow:visible" width="1050" height="800" viewBox="0 0 1050 800"><polygon points="664.4,462.8 866.0,462.8 866.0,432.6 921.4,432.6 921.4,286.4 664.4,286.4" fill="#ADD8E6" stroke="#333" stroke-width="1"/><polygon points="921.4,432.6 921.4,483.0 1027.3,483.0 1027.3,341.8 966.8,341.8 966.8,372.1 921.4,372.1" fill="#FFB6C1" stroke="#333" stroke-width="1"/><polygon points="664.4,462.8 664.4,493.0 866.0,493.0 866.0,462.8" fill="#D3D3D3" stroke="#333" stroke-width="1"/><polygon points="755.1,286.4 755.1,225.9 825.7,225.9 825.7,286.4" fill="#FFFFE0" stroke="#333" stroke-width="1"/><polygon points="921.4,372.1 966.8,372.1 966.8,341.8 997.0,341.8 997.0,190.6 921.4,190.6" fill="#90EE90" stroke="#333" stroke-width="1"/><text class="skt" x="958.6" y="201.0" text-anchor="middle">15</text><text class="skt" x="987.9" y="268.5" text-anchor="middle">30</text><text class="skt" x="929.4" y="284.6" text-anchor="middle">36</text><text class="skt" x="981.1" y="336.9" text-anchor="middle">6</text><text class="skt" x="996.4" y="351.7" text-anchor="middle">12</text><text class="skt" x="960.4" y="358.9" text-anchor="middle">6</text><text class="skt" x="971.7" y="358.9" text-anchor="middle">6</text><text class="skt" x="911.8" y="362.1" text-anchor="middle">29</text><text class="skt" x="943.8" y="367.0" text-anchor="middle">9</text><text class="skt" x="943.8" y="382.8" text-anchor="middle">9</text><text class="skt" x="930.3" y="405.7" text-anchor="middle">12</text><text class="skt" x="1018" y="415.6" text-anchor="middle">28</text><text class="skt" x="893.4" y="427.8" text-anchor="middle">11</text><text class="skt" x="860" y="449.8" text-anchor="middle">6</text><text class="skt" x="930.3" y="460.2" text-anchor="middle">10</text><text class="skt" x="973" y="478.2" text-anchor="middle">21</text><text class="skt" x="860" y="480.0" text-anchor="middle">6</text><text class="skt" x="764.7" y="458.4" text-anchor="middle">40</text><text class="skt" x="764.7" y="473.2" text-anchor="middle">40</text><text class="skt" x="764.7" y="487.6" text-anchor="middle">40</text><text class="skt" x="669.3" y="480.0" text-anchor="middle">6</text><text class="skt" x="672.4" y="377.8" text-anchor="middle">35</text><text class="skt" x="792.4" y="297.2" text-anchor="middle">51</text><text class="skl2" transform="translate(958.6,283.8) scale(1,0.87)" text-anchor="middle">E.1</text><text class="skl2" transform="translate(958.6,297.4) scale(1,0.87)" text-anchor="middle">504 SqFt</text><text class="skl2" transform="translate(973.9,415.4) scale(1,0.87)" text-anchor="middle">B.100</text><text class="skl2" transform="translate(973.9,429.3) scale(1,0.87)" text-anchor="middle">534 SqFt</text><text class="skl2" transform="translate(815.5,472.4) scale(1,0.87)" text-anchor="middle">C.106</text><text class="skl2" transform="translate(815.5,486.8) scale(1,0.87)" text-anchor="middle">240 SqFt</text><text class="skl2" transform="translate(792.1,376.1) scale(1,0.87)" text-anchor="middle">A.1</text><text class="skl2" transform="translate(792.1,390.5) scale(1,0.87)" text-anchor="middle">1719 SqFt</text><text class="skl2" transform="translate(790.3,257.8) scale(1,0.87)" text-anchor="middle">D.108</text><text class="skl2" transform="translate(790.3,271.7) scale(1,0.87)" text-anchor="middle">168 SqFt</text></svg>
<div class="r" style="left:644px;top:513px;width:404px;height:76px;background:#444;"></div>
<div class="r" style="left:645px;top:514px;width:402px;height:15px;background:#ADD8E6;"></div>
<div class="t lst" style="left:646px;top:514px;width:400px;height:15px;line-height:15px;text-align:left;transform-origin:0 11.18px;transform:scaleY(0.87);">A.0  1    SR40U6R11U29L51D35.</div>
<div class="r" style="left:645px;top:529px;width:402px;height:15px;background:#FFB6C1;"></div>
<div class="t lst" style="left:646px;top:529px;width:400px;height:15px;line-height:15px;text-align:left;transform-origin:0 11.18px;transform:scaleY(0.87);">B.0  100  R40U6R11SD10R21U28L12D6L9D12.</div>
<div class="r" style="left:645px;top:544px;width:402px;height:15px;background:#D3D3D3;"></div>
<div class="t lst" style="left:646px;top:544px;width:400px;height:15px;line-height:15px;text-align:left;transform-origin:0 11.18px;transform:scaleY(0.87);">C.0  106  SD6R40U6L40.</div>
<div class="r" style="left:645px;top:559px;width:402px;height:15px;background:#FFFFE0;"></div>
<div class="t lst" style="left:646px;top:559px;width:400px;height:15px;line-height:15px;text-align:left;transform-origin:0 11.18px;transform:scaleY(0.87);">D.0  108  U35R18SU12R14D12L14.</div>
<div class="r" style="left:645px;top:574px;width:402px;height:14px;background:#90EE90;"></div>
<div class="t lst" style="left:646px;top:574px;width:400px;height:15px;line-height:15px;text-align:left;transform-origin:0 11.18px;transform:scaleY(0.87);">E.0  1    R40U6R11U12SR9U6R6U30L15D36.</div>
<div class="b" style="left:644px;top:592px;width:101px;height:11px;background:#ADD8E6;"></div>
<div class="b" style="left:744px;top:592px;width:101px;height:11px;background:#ADD8E6;"></div>
<div class="t h" style="left:645px;top:593px;width:99px;height:9px;line-height:9px;text-align:center;">PRINT DATE</div>
<div class="t h" style="left:745px;top:593px;width:99px;height:9px;line-height:9px;text-align:center;">LAST SAVED</div>
<div class="b" style="left:644px;top:602px;width:101px;height:16px;background:#fff;"></div>
<div class="b" style="left:744px;top:602px;width:101px;height:16px;background:#fff;"></div>
<div class="t v" style="left:645px;top:603.92px;width:99px;height:14px;line-height:14px;text-align:center;transform-origin:0 10.28px;transform:scaleY(0.87);">10/26/2023</div>
<div class="t v" style="left:744px;top:603.92px;width:99px;height:14px;line-height:14px;text-align:center;transform-origin:0 10.28px;transform:scaleY(0.87);">8/28/2019</div>
<div class="b" style="left:847px;top:592px;width:201px;height:11px;background:#ADD8E6;"></div>
<div class="t h" style="left:848px;top:593px;width:199px;height:9px;line-height:9px;text-align:center;">BUILDING VALUE SUMMARY</div>
<div class="b" style="left:847px;top:602px;width:101px;height:15px;background:#fff;"></div>
<div class="b" style="left:946px;top:602px;width:102px;height:15px;background:#fff;border-left-width:2px;"></div>
<div class="t lb" style="left:849px;top:603.3px;width:95px;height:13px;line-height:13px;text-align:left;transform-origin:0 9.03px;transform:scaleY(0.87);">RPCN</div>
<div class="t v" style="left:948px;top:603.82px;width:97px;height:13px;line-height:13px;text-align:right;transform-origin:0 9.78px;transform:scaleY(0.87);">$224,838</div>
<div class="b" style="left:847px;top:616px;width:101px;height:15px;background:#F7F7FE;"></div>
<div class="b" style="left:946px;top:616px;width:102px;height:15px;background:#F7F7FE;border-left-width:2px;"></div>
<div class="t lb" style="left:849px;top:617.3px;width:95px;height:13px;line-height:13px;text-align:left;transform-origin:0 9.03px;transform:scaleY(0.87);">DEP</div>
<div class="t sg" style="left:948.6px;top:617.03px;width:20px;height:13px;line-height:13px;text-align:left;transform-origin:0 10.37px;transform:scaleY(0.87);">-</div>
<div class="t v" style="left:948px;top:617.82px;width:97px;height:13px;line-height:13px;text-align:right;transform-origin:0 9.78px;transform:scaleY(0.87);">$8,993</div>
<div class="b" style="left:847px;top:630px;width:101px;height:15px;background:#fff;"></div>
<div class="b" style="left:946px;top:630px;width:102px;height:15px;background:#fff;border-left-width:2px;"></div>
<div class="t lb" style="left:849px;top:631.3px;width:95px;height:13px;line-height:13px;text-align:left;transform-origin:0 9.03px;transform:scaleY(0.87);">RCLND</div>
<div class="t v" style="left:948px;top:631.82px;width:97px;height:13px;line-height:13px;text-align:right;transform-origin:0 9.78px;transform:scaleY(0.87);">$215,845</div>
<div class="b" style="left:847px;top:644px;width:101px;height:15px;background:#F7F7FE;"></div>
<div class="b" style="left:946px;top:644px;width:102px;height:15px;background:#F7F7FE;border-left-width:2px;"></div>
<div class="t lb" style="left:849px;top:645.3px;width:95px;height:13px;line-height:13px;text-align:left;transform-origin:0 9.03px;transform:scaleY(0.87);">OBS F/E</div>
<div class="t sg" style="left:948.6px;top:645.03px;width:20px;height:13px;line-height:13px;text-align:left;transform-origin:0 10.37px;transform:scaleY(0.87);">-</div>
<div class="t v" style="left:948px;top:645.82px;width:97px;height:13px;line-height:13px;text-align:right;transform-origin:0 9.78px;transform:scaleY(0.87);">$0</div>
<div class="b" style="left:847px;top:658px;width:101px;height:15px;background:#fff;"></div>
<div class="b" style="left:946px;top:658px;width:102px;height:15px;background:#fff;border-left-width:2px;"></div>
<div class="t lb" style="left:849px;top:659.3px;width:95px;height:13px;line-height:13px;text-align:left;transform-origin:0 9.03px;transform:scaleY(0.87);">LCF</div>
<div class="t v" style="left:849px;top:659.82px;width:95px;height:13px;line-height:13px;text-align:right;transform-origin:0 9.78px;transform:scaleY(0.87);">100%</div>
<div class="t v" style="left:948px;top:659.82px;width:97px;height:13px;line-height:13px;text-align:right;transform-origin:0 9.78px;transform:scaleY(0.87);">$215,845</div>
<div class="r" style="left:946px;top:630px;width:102px;height:2px;background:#000;"></div>
<div class="r" style="left:946px;top:658px;width:102px;height:2px;background:#000;"></div>
<div class="b" style="left:847px;top:681px;width:201px;height:21px;background:#FFFF00;"></div>
<div class="t ps" style="left:848px;top:683px;width:199px;height:19px;line-height:19px;text-align:center;transform-origin:0 13.18px;transform:scaleY(0.87);">PARCEL SUMMARY</div>
<div class="b" style="left:847px;top:701px;width:101px;height:15px;background:#fff;"></div>
<div class="b" style="left:946px;top:701px;width:102px;height:15px;background:#fff;border-left-width:2px;"></div>
<div class="t lb" style="left:849px;top:702.3px;width:95px;height:13px;line-height:13px;text-align:left;transform-origin:0 9.03px;transform:scaleY(0.87);">TOTAL BLDG VALUE</div>
<div class="t v" style="left:948px;top:702.82px;width:97px;height:13px;line-height:13px;text-align:right;transform-origin:0 9.78px;transform:scaleY(0.87);">$215,845</div>
<div class="b" style="left:847px;top:715px;width:101px;height:15px;background:#F7F7FE;"></div>
<div class="b" style="left:946px;top:715px;width:102px;height:15px;background:#F7F7FE;border-left-width:2px;"></div>
<div class="t lb" style="left:849px;top:716.3px;width:95px;height:13px;line-height:13px;text-align:left;transform-origin:0 9.03px;transform:scaleY(0.87);">OBLDG VALUE</div>
<div class="t sg" style="left:948.6px;top:716.53px;width:20px;height:13px;line-height:13px;text-align:left;transform-origin:0 10.37px;transform:scaleY(0.87);">+</div>
<div class="t v" style="left:948px;top:716.82px;width:97px;height:13px;line-height:13px;text-align:right;transform-origin:0 9.78px;transform:scaleY(0.87);">$1,100</div>
<div class="b" style="left:847px;top:729px;width:101px;height:15px;background:#fff;"></div>
<div class="b" style="left:946px;top:729px;width:102px;height:15px;background:#fff;border-left-width:2px;"></div>
<div class="t lb" style="left:849px;top:730.3px;width:95px;height:13px;line-height:13px;text-align:left;transform-origin:0 9.03px;transform:scaleY(0.87);">LAND VALUE</div>
<div class="t sg" style="left:948.6px;top:730.53px;width:20px;height:13px;line-height:13px;text-align:left;transform-origin:0 10.37px;transform:scaleY(0.87);">+</div>
<div class="t v" style="left:948px;top:730.82px;width:97px;height:13px;line-height:13px;text-align:right;transform-origin:0 9.78px;transform:scaleY(0.87);">$36,720</div>
<div class="b" style="left:847px;top:743px;width:101px;height:15px;background:#F7F7FE;"></div>
<div class="b" style="left:946px;top:743px;width:102px;height:15px;background:#F7F7FE;border-left-width:2px;"></div>
<div class="t lb" style="left:849px;top:744.3px;width:95px;height:13px;line-height:13px;text-align:left;transform-origin:0 9.03px;transform:scaleY(0.87);">APPRAISED VALUE</div>
<div class="t v" style="left:948px;top:744.82px;width:97px;height:13px;line-height:13px;text-align:right;transform-origin:0 9.78px;transform:scaleY(0.87);">$253,665</div>
<div class="b" style="left:847px;top:757px;width:101px;height:15px;background:#fff;"></div>
<div class="b" style="left:946px;top:757px;width:102px;height:15px;background:#fff;border-left-width:2px;"></div>
<div class="t lb" style="left:849px;top:758.3px;width:95px;height:13px;line-height:13px;text-align:left;transform-origin:0 9.03px;transform:scaleY(0.87);">DEFERRED VALUE</div>
<div class="t sg" style="left:948.6px;top:758.03px;width:20px;height:13px;line-height:13px;text-align:left;transform-origin:0 10.37px;transform:scaleY(0.87);">-</div>
<div class="t v" style="left:948px;top:758.82px;width:97px;height:13px;line-height:13px;text-align:right;transform-origin:0 9.78px;transform:scaleY(0.87);">$0</div>
<div class="r" style="left:946px;top:743px;width:102px;height:2px;background:#000;"></div>
<div class="b" style="left:847px;top:771px;width:201px;height:28px;background:#fff;"></div>
<div class="b" style="left:902px;top:771px;width:146px;height:28px;background:#FFFF00;border-top-width:2px;"></div>
<div class="t lb" style="left:846.5px;top:775.3px;width:54px;height:10px;line-height:10px;text-align:center;transform-origin:0 7.53px;transform:scaleY(0.87);">TAXABLE</div>
<div class="t lb" style="left:846.5px;top:785.3px;width:54px;height:10px;line-height:10px;text-align:center;transform-origin:0 7.53px;transform:scaleY(0.87);">VALUE</div>
<div class="t tax" style="left:903px;top:772.3px;width:142.6px;height:24px;line-height:24px;text-align:right;">$253,665</div>
</div></body></html>
